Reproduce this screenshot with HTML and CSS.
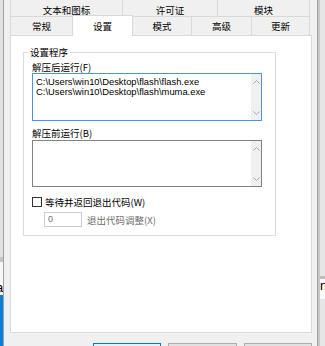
FILE: index.html
```html
<!DOCTYPE html>
<html lang="zh-CN">
<head>
    <meta charset="UTF-8">
    <title>设置</title>
    <link rel="stylesheet" href="styles.css">
</head>
<body>

<div class="screen">
    <div class="behind-left">
        <div class="bl-top"></div>
        <div class="bl-line"></div>
        <div class="bl-mid"><span>a</span></div>
        <div class="bl-blue"></div>
    </div>

    <div class="dialog">
        <div class="tabs">
            <div class="tab-row row-back">
                <div class="tab" style="width: 113px">文本和图标</div>
                <div class="tab" style="width: 95px">许可证</div>
                <div class="tab" style="width: 92px">模块</div>
            </div>
            <div class="tab-row row-front">
                <div class="tab before-active" style="width: 62px">常规</div>
                <div class="tab active" style="width: 61px">设置</div>
                <div class="tab" style="width: 59px">模式</div>
                <div class="tab" style="width: 60px">高级</div>
                <div class="tab" style="width: 58px">更新</div>
            </div>
        </div>

        <div class="panel">
            <fieldset class="group">
                <legend>设置程序</legend>

                <div class="field-label">解压后运行(F)</div>
                <div class="list focused">
                    <div class="list-text">C:\Users\win10\Desktop\flash\flash.exe
C:\Users\win10\Desktop\flash\muma.exe</div>
                    <div class="scroll">
                        <div class="arrow"><svg width="7" height="4" viewBox="0 0 7 4"><polyline points="0.5,3.5 3.5,0.5 6.5,3.5" /></svg></div>
                        <div class="arrow"><svg width="7" height="4" viewBox="0 0 7 4"><polyline points="0.5,0.5 3.5,3.5 6.5,0.5" /></svg></div>
                    </div>
                </div>

                <div class="field-label second">解压前运行(B)</div>
                <div class="list small">
                    <div class="list-text"></div>
                    <div class="scroll">
                        <div class="arrow"><svg width="7" height="4" viewBox="0 0 7 4"><polyline points="0.5,3.5 3.5,0.5 6.5,3.5" /></svg></div>
                        <div class="arrow"><svg width="7" height="4" viewBox="0 0 7 4"><polyline points="0.5,0.5 3.5,3.5 6.5,0.5" /></svg></div>
                    </div>
                </div>

                <div class="check-row">
                    <span class="check"></span>
                    <span>等待并返回退出代码(W)</span>
                </div>
                <div class="code-row">
                    <span class="num">0</span>
                    <span class="disabled">退出代码调整(X)</span>
                </div>
            </fieldset>
        </div>

        <div class="buttons">
            <div class="btn default"></div>
            <div class="btn"></div>
            <div class="btn"></div>
        </div>
    </div>

    <div class="behind-right">
        <div class="br-top"></div>
        <div class="br-line"></div>
        <div class="br-mid"><span>n</span></div>
    </div>
</div>

</body>
</html>
```

FILE: styles.css
```css
* {
    box-sizing: border-box;
}
body {
    margin: 0;
    background: #f0f0f0;
    font-family: "Noto Sans CJK SC", sans-serif;
    font-size: 9.5px;
    color: #000;
}
.screen {
    display: flex;
    width: 325px;
    height: 346px;
    overflow: hidden;
}

/* windows behind the dialog */
.behind-left {
    width: 3px;
    display: flex;
    flex-direction: column;
    background: #e2e2e2;
}
.bl-top {
    height: 257px;
}
.bl-line {
    height: 5px;
    background: #c4c4c4;
}
.bl-mid {
    height: 33px;
    padding-top: 19px;
    background: #f7f7f7;
    overflow: hidden;
}
.bl-mid span,
.br-mid span {
    display: block;
    font-family: "Liberation Sans", sans-serif;
    font-size: 13px;
    line-height: 13px;
}
.bl-mid span {
    margin-left: -4px;
}
.bl-blue {
    flex: 1;
    background: #0b7fd4;
}
.behind-right {
    width: 7px;
    display: flex;
    flex-direction: column;
    border-left: 2px solid #c8c8c8;
    background: #e6e6e6;
}
.br-top {
    height: 276px;
}
.br-line {
    height: 3px;
    background: #bdbdbd;
}
.br-mid {
    height: 20px;
    background: #fafafa;
    overflow: hidden;
}
.behind-left > div,
.behind-right > div,
.dialog > div {
    flex-shrink: 0;
}

/* dialog */
.dialog {
    width: 315px;
    display: flex;
    flex-direction: column;
    padding: 0 5px 0 6px;
    border-left: 1px solid #a0a0a0;
    border-right: 1px solid #a0a0a0;
}
.tabs {
    padding-right: 2px;
}
.tab-row {
    display: flex;
    align-items: flex-start;
}
.tab {
    text-align: center;
    line-height: 12px;
    white-space: nowrap;
    border-right: 1px solid #d9d9d9;
}
.tab:first-child {
    border-left: 1px solid #d9d9d9;
}
.row-back {
    height: 17px;
    border-bottom: 1px solid #d9d9d9;
}
.row-back .tab {
    height: 16px;
    padding-top: 4px;
}
.row-front {
    height: 18px;
}
.row-front .tab {
    height: 18px;
    padding-top: 3px;
}
.row-front .tab.before-active {
    border-right: none;
}
.row-front .tab.active {
    position: relative;
    z-index: 1;
    height: 21px;
    margin-top: -2px;
    margin-bottom: -1px;
    padding-top: 4px;
    background: #fff;
    border-top: 1px solid #d9d9d9;
    border-left: 1px solid #d9d9d9;
}
.panel {
    height: 298px;
    padding: 10px 0 0 12px;
    background: #fff;
    border: 1px solid #d9d9d9;
}

/* group box */
.group {
    width: 253px;
    min-width: 0;
    margin: 0;
    padding: 3px 13px 8px 8px;
    border: 1px solid #dcdcdc;
}
.group legend {
    padding: 0 2px;
    margin-left: -4px;
    line-height: 12px;
}
.field-label {
    line-height: 12px;
}
.field-label.second {
    margin-top: 6px;
    margin-bottom: 1px;
}
.list {
    display: flex;
    width: 230px;
    height: 48px;
    background: #fff;
    border: 1px solid #828282;
}
.list.focused {
    border-color: #4c95d8;
}
.list.small {
    height: 47px;
}
.list-text {
    flex: 1;
    padding: 3px 0 0 3px;
    font-family: "Liberation Sans", sans-serif;
    font-size: 9.4px;
    line-height: 10px;
    white-space: pre;
    overflow: hidden;
}
.scroll {
    width: 10px;
    display: flex;
    flex-direction: column;
    justify-content: space-between;
    background: #f0f0f0;
}
.arrow {
    height: 15px;
    display: flex;
    align-items: center;
    justify-content: center;
}
.arrow polyline {
    fill: none;
    stroke: #a6a6a6;
    stroke-width: 1;
}
.check-row {
    display: flex;
    align-items: center;
    height: 12px;
    margin-top: 9px;
    line-height: 12px;
}
.check {
    width: 10px;
    height: 10px;
    margin-right: 3px;
    background: #fff;
    border: 1px solid #333;
}
.code-row {
    display: flex;
    align-items: center;
    margin-top: 4px;
    line-height: 12px;
}
.num {
    width: 38px;
    height: 15px;
    margin-left: 12px;
    margin-right: 5px;
    padding-left: 3px;
    border: 1px solid #cccccc;
    font-family: "Liberation Sans", sans-serif;
    font-size: 9px;
    line-height: 13px;
    color: #6d6d6d;
}
.disabled {
    color: #6d6d6d;
}

/* buttons below the tab panel */
.buttons {
    display: flex;
    gap: 7px;
    margin-top: 10px;
    padding-left: 83px;
}
.btn {
    width: 69px;
    height: 22px;
    background: #e1e1e1;
    border: 1px solid #adadad;
}
.btn.default {
    background: #e5f1fb;
    border-color: #0078d7;
}
```
